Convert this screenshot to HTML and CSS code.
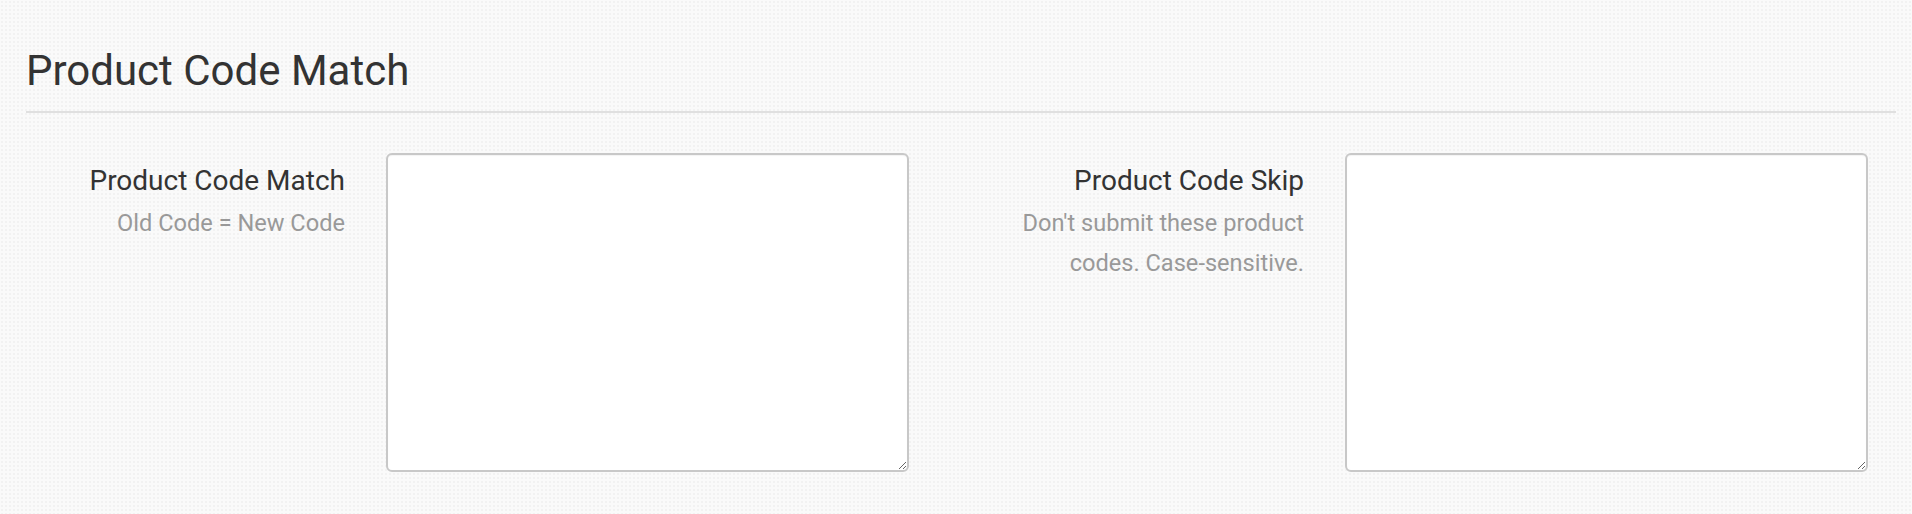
FILE: index.html
```html
<!DOCTYPE html>
<html lang="en">
<head>
    <meta charset="UTF-8">
    <meta name="viewport" content="width=device-width, initial-scale=1.0">
    <title>Product Code Match</title>
    <link rel="stylesheet" href="styles.css">
</head>
<body>

    <div class="pagina">
        <div class="cabecera">
            <h1>Product Code Match</h1>
        </div>

        <div class="campos">
            <div class="campo">
                <div class="etiqueta">
                    <label for="codeMatch">Product Code Match</label>
                    <p class="ayuda">Old Code = New Code</p>
                </div>
                <textarea id="codeMatch"></textarea>
            </div>

            <div class="campo">
                <div class="etiqueta">
                    <label for="codeSkip">Product Code Skip</label>
                    <p class="ayuda">Don't submit these product codes. Case-sensitive.</p>
                </div>
                <textarea id="codeSkip"></textarea>
            </div>
        </div>
    </div>

</body>
</html>
```

FILE: styles.css
```css
body {
    font-family: Roboto, "Liberation Sans", Arial, sans-serif;
    margin: 0;
    background-color: #fafafa;
    background-image: radial-gradient(#f2f2f2 1px, transparent 1px);
    background-size: 4px 4px;
    color: #333;
}

.pagina {
    padding: 0 16px 0 26px;
}

.cabecera {
    padding-top: 46px;
    padding-bottom: 15px;
    border-bottom: 2px solid #e0e0e0;
}

h1 {
    margin: 0;
    font-size: 42px;
    font-weight: 400;
    line-height: 50px;
    color: #333;
}

.campos {
    display: grid;
    grid-template-columns: 883px 883px;
    column-gap: 76px;
    padding-top: 40px;
}

.campo {
    display: grid;
    grid-template-columns: 319px 1fr;
    column-gap: 41px;
    align-items: start;
}

.etiqueta {
    text-align: right;
    padding-top: 8px;
}

.etiqueta label {
    display: block;
    font-size: 28px;
    line-height: 40px;
    color: #333;
}

.ayuda {
    margin: 2px 0 0;
    font-size: 23.6px;
    line-height: 40px;
    color: #999;
}

textarea {
    width: 100%;
    height: 319px;
    box-sizing: border-box;
    border: 2px solid #c8c8c8;
    border-radius: 6px;
    background-color: #fff;
    box-shadow: inset 0 1px 1px rgba(0, 0, 0, 0.05);
    font-family: inherit;
    font-size: 20px;
    padding: 8px 12px;
}
```
